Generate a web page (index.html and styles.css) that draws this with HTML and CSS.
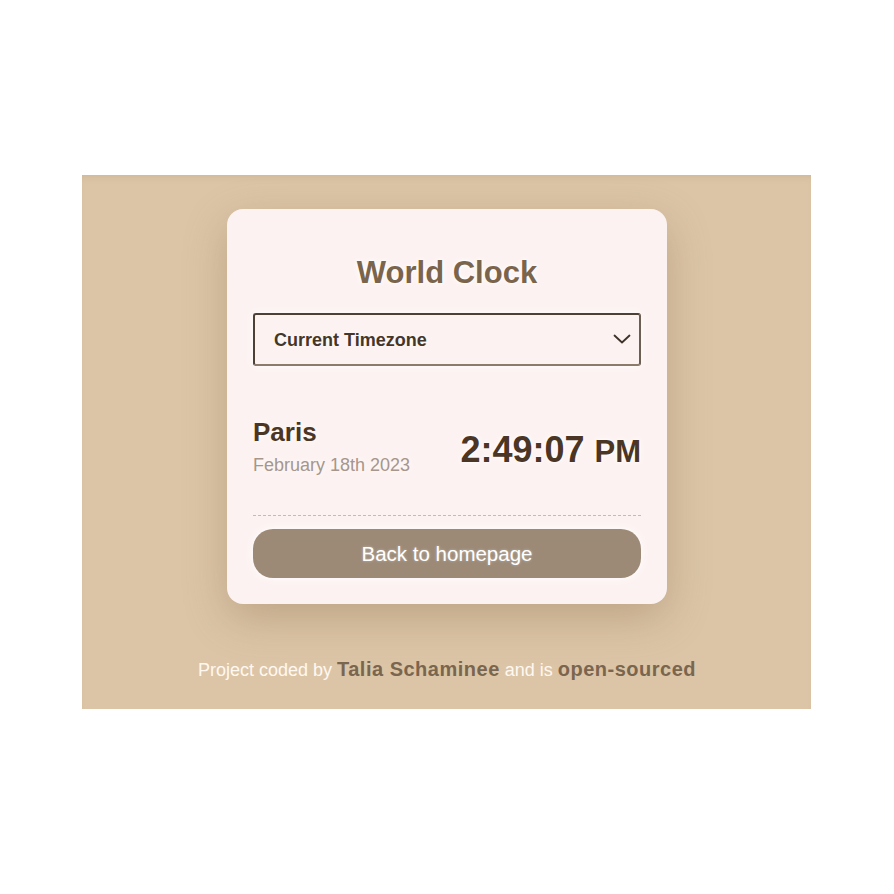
FILE: index.html
```html
<!DOCTYPE html>
<html lang="en">
<head>
<meta charset="utf-8">
<title>World Clock</title>
<link rel="stylesheet" href="styles.css">
</head>
<body>
<main class="page">
  <section class="card">
    <h1 class="title">World Clock</h1>
    <div class="select-wrap">
      <select class="tz-select">
        <option>Current Timezone</option>
      </select>
      <svg class="chevron" width="18" height="10" viewBox="0 0 18 10" aria-hidden="true">
        <path d="M1.5 1.5 L9 8.5 L16.5 1.5" fill="none" stroke="#3e3128" stroke-width="1.8" stroke-linecap="round" stroke-linejoin="round"/>
      </svg>
    </div>
    <div class="city-row">
      <div class="city-info">
        <div class="city-name">Paris</div>
        <div class="city-date">February 18th 2023</div>
      </div>
      <div class="city-time">2:49:07 <small class="ampm">PM</small></div>
    </div>
    <hr class="divider">
    <a class="back-btn" href="#">Back to homepage</a>
  </section>
  <footer class="footer">
    Project coded by <a class="footer-link" href="#">Talia Schaminee</a> and is <a class="footer-link" href="#">open-sourced</a>
  </footer>
</main>
</body>
</html>
```

FILE: styles.css
```css
html, body {
  margin: 0;
  padding: 0;
  background: #ffffff;
}

body {
  font-family: "Liberation Sans", Arial, sans-serif;
  padding-top: 175px;
  padding-right: 1px;
}

.page {
  width: 729px;
  box-sizing: border-box;
  margin: 0 auto;
  background: #dcc5a7;
  box-shadow: inset 0 6px 10px -6px rgba(120, 90, 50, 0.18);
  padding: 34px 0 28px 1px;
  display: flex;
  flex-direction: column;
  align-items: center;
}

.card {
  width: 440px;
  box-sizing: border-box;
  background: #fcf2f1;
  border-radius: 16px;
  padding: 0 26px 26px;
  box-shadow: 0 14px 44px rgba(120, 90, 55, 0.3);
  display: flex;
  flex-direction: column;
}

.title {
  margin: 46px 0 22px;
  font-size: 31px;
  line-height: 36px;
  font-weight: 700;
  text-align: center;
  color: #7b644c;
  text-shadow: 0 0 6px #ffffff, 0 0 3px #ffffff, 0 0 2px #ffffff;
}

.select-wrap {
  position: relative;
}

.tz-select {
  display: block;
  width: 100%;
  height: 53px;
  box-sizing: border-box;
  appearance: none;
  -webkit-appearance: none;
  background: #fcf2f1;
  border: 2px solid;
  border-color: #4c4037 #6c5e51 #8c7b6a #4c4037;
  border-radius: 3px;
  padding: 0 40px 0 19px;
  font-family: "Liberation Sans", Arial, sans-serif;
  font-size: 18px;
  font-weight: 700;
  color: #45362a;
  text-shadow: 0 0 5px #ffffff;
  box-shadow: 0 0 8px #ffffff;
}

.chevron {
  position: absolute;
  right: 10px;
  top: 21px;
}

.city-row {
  display: flex;
  justify-content: space-between;
  align-items: center;
  margin-top: 51px;
}

.city-name {
  font-size: 26px;
  line-height: 30px;
  font-weight: 700;
  color: #4b3524;
  text-shadow: 0 0 6px #ffffff;
}

.city-date {
  margin-top: 7px;
  font-size: 18px;
  line-height: 22px;
  color: #a6968c;
  text-shadow: 0 0 6px #ffffff;
}

.city-time {
  font-size: 36px;
  line-height: 40px;
  font-weight: 700;
  color: #4b3524;
  text-shadow: 0 0 6px #ffffff, 0 0 3px #ffffff;
  padding-top: 9px;
}

.ampm {
  font-size: 31px;
}

.divider {
  margin: 39px 0 13px;
  border: 0;
  border-top: 1px dashed #c9b9b2;
  height: 0;
}

.back-btn {
  display: block;
  height: 49px;
  line-height: 49px;
  border-radius: 20px;
  background: #9c8a77;
  color: #ffffff;
  text-align: center;
  text-decoration: none;
  font-size: 20.5px;
  box-shadow: 0 0 10px #ffffff;
  text-shadow: 0 0 3px rgba(255, 255, 255, 0.4);
}

.footer {
  margin-top: 54px;
  font-size: 18px;
  line-height: 22px;
  color: #fff8f0;
}

.footer-link {
  color: #7a654f;
  font-weight: 700;
  text-decoration: none;
  letter-spacing: 0.5px;
  font-size: 20px;
}
```
